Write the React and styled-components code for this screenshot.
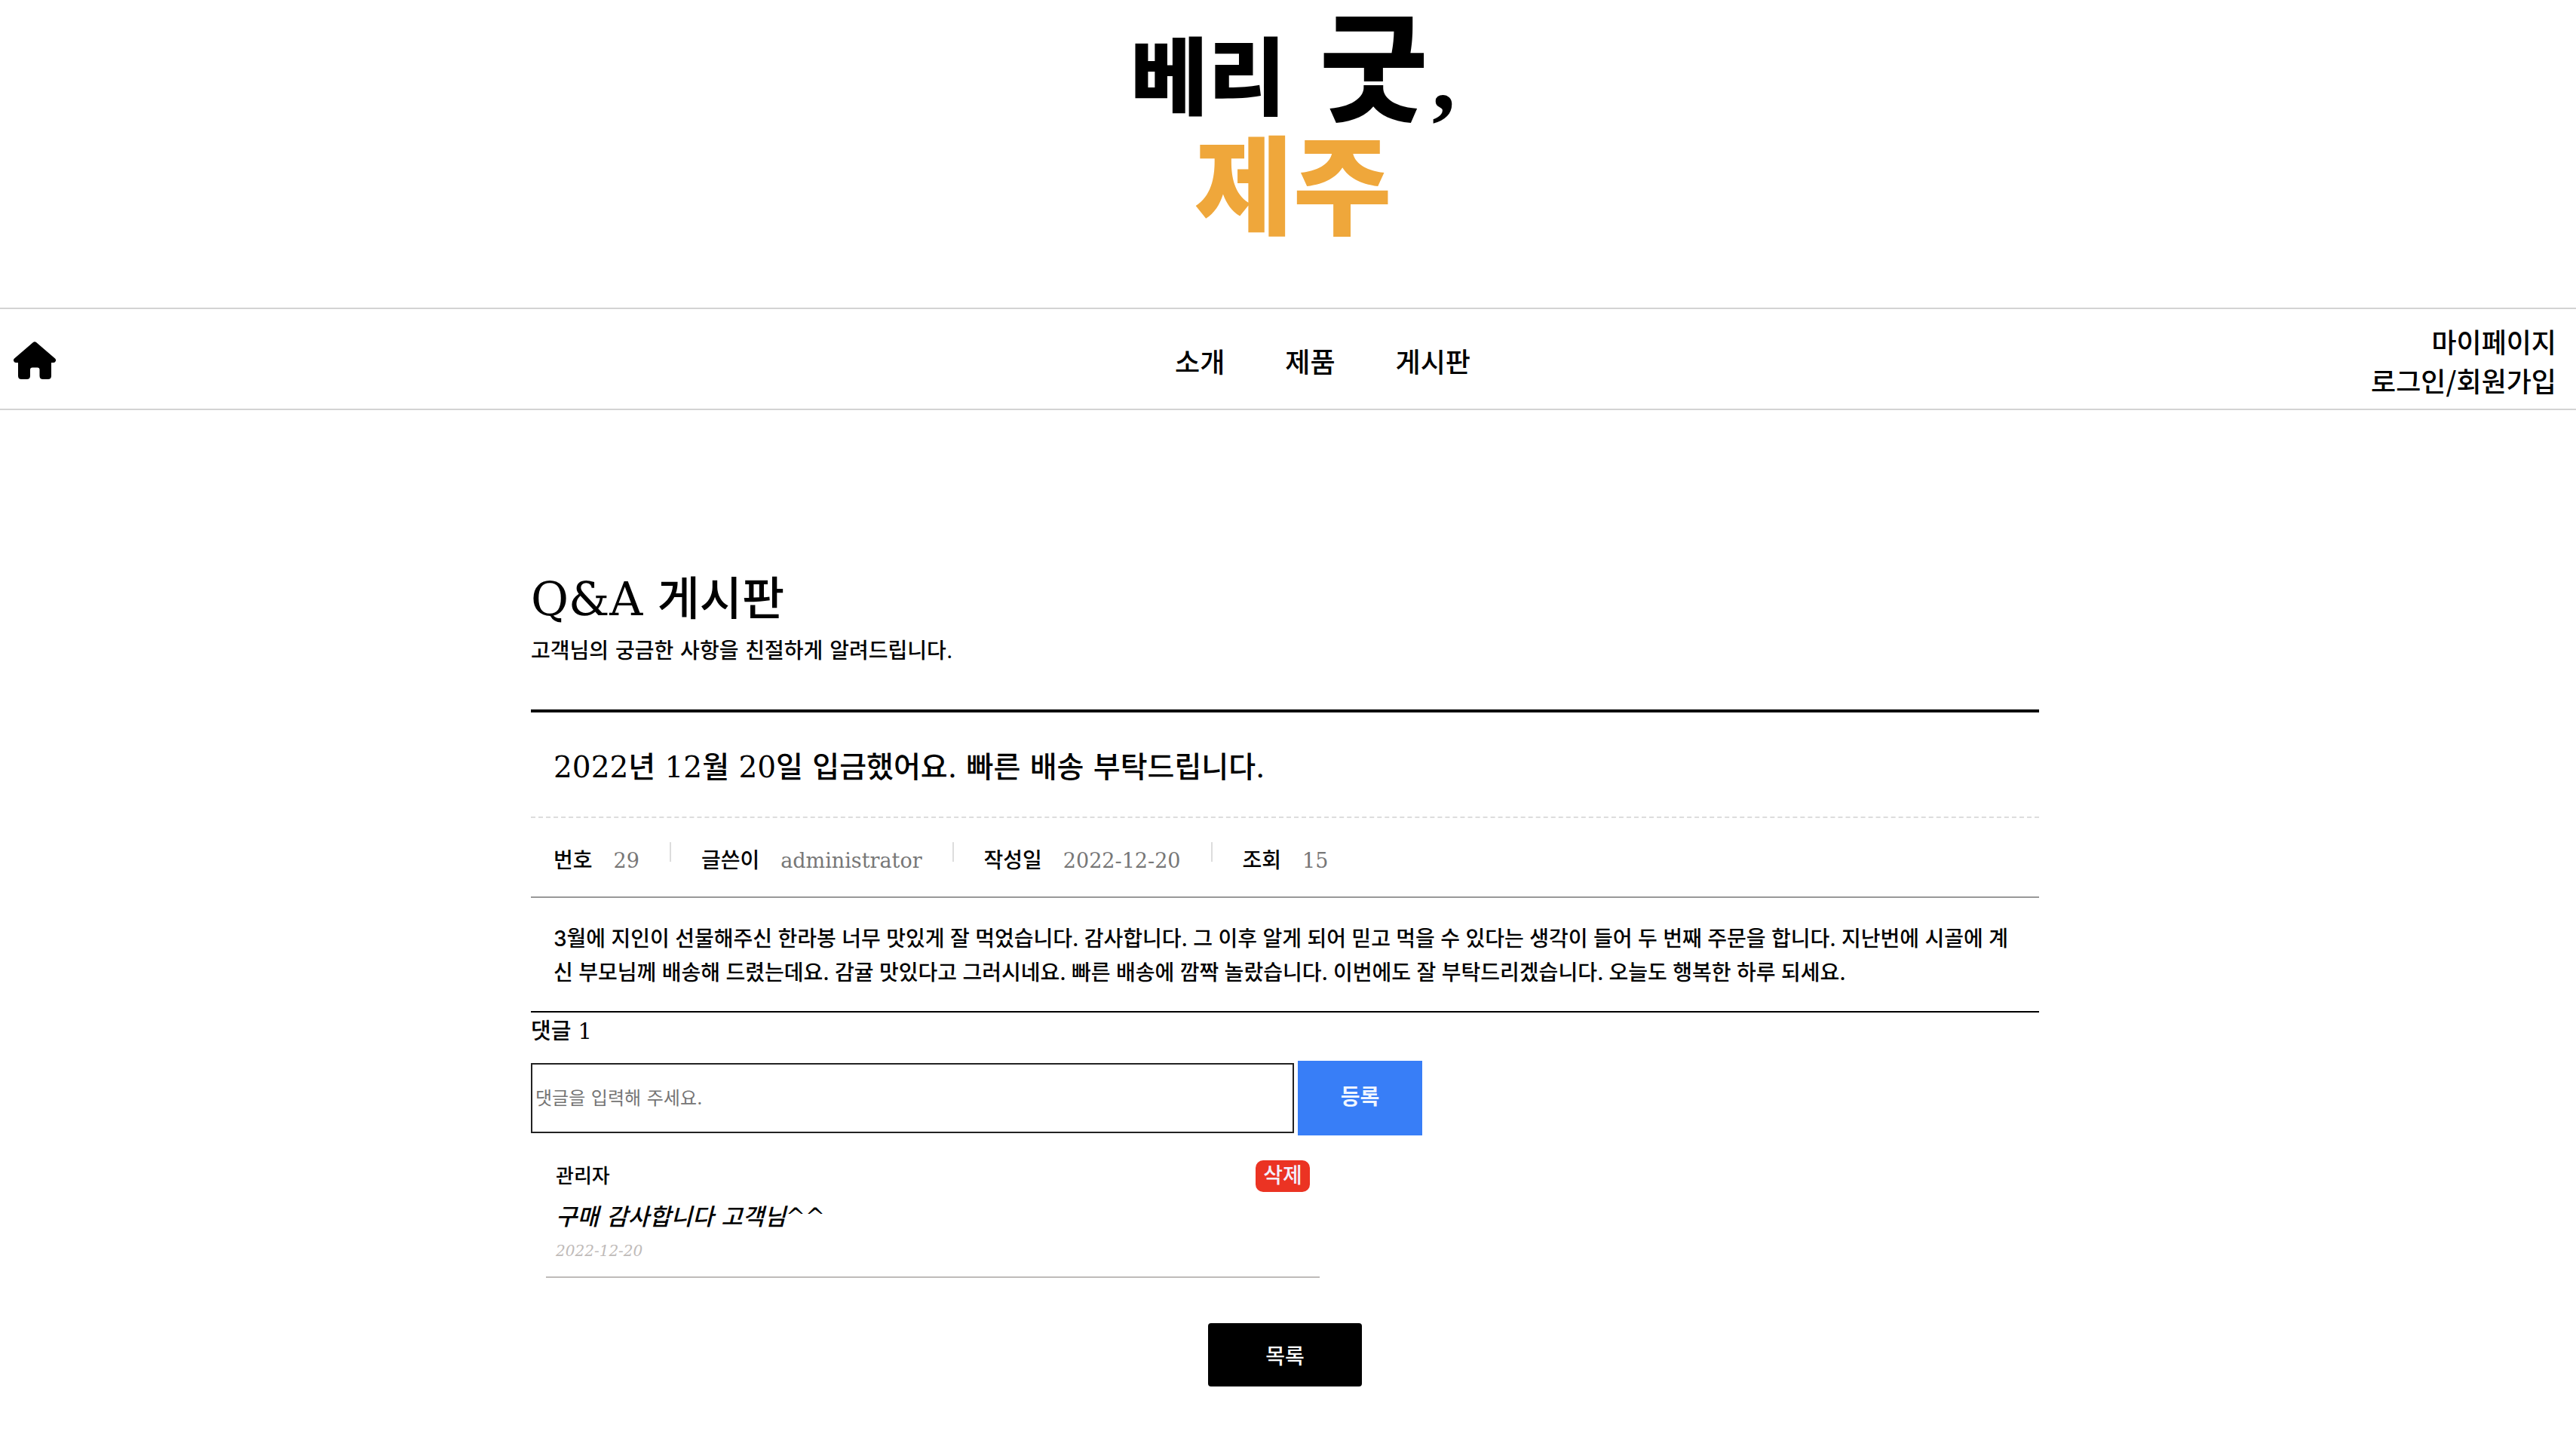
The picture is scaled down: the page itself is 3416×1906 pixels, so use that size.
import React from "react";
import styled, { createGlobalStyle } from "styled-components";

const GlobalStyle = createGlobalStyle`
  *, *::before, *::after { box-sizing: border-box; }
  body {
    margin: 0;
    background: #fff;
    color: #000;
    font-family: "DejaVu Serif", "Noto Sans CJK KR", serif;
    font-size: 28px;
    font-weight: 500;
  }
  h1, h2, h3, p, ul, dl, dd { margin: 0; padding: 0; }
  ul { list-style: none; }
  a { color: inherit; text-decoration: none; }
  button, input { font-family: inherit; }
`;

const Header = styled.header`
  display: flex;
  justify-content: center;
  height: 408px;
`;

const LogoLink = styled.a`
  display: block;
  height: 340px;
`;

const LogoText = styled.text`
  font-family: "Liberation Serif", "Noto Sans CJK KR", sans-serif;
  font-weight: 900;
  font-size: ${(p) => p.$size}px;
  fill: ${(p) => p.$color || "#000"};
`;

const NavBar = styled.nav`
  display: grid;
  grid-template-columns: 1fr auto 1fr;
  align-items: center;
  min-height: 136px;
  padding: 3px 26px 0 18px;
  border-top: 2px solid #d3d3d3;
  border-bottom: 2px solid #d3d3d3;
  font-family: "Noto Sans CJK KR", sans-serif;
  font-size: 36px;
  line-height: 52px;
`;

const HomeLink = styled.a`
  justify-self: start;
  display: flex;
`;

const Menu = styled.ul`
  display: flex;
  gap: 80px;
  padding-left: 100px;
`;

const UserMenu = styled.ul`
  text-align: right;
`;

const Main = styled.main`
  padding: 212px 8px 64px 0;
`;

const Board = styled.div`
  width: 100%;
  max-width: 2000px;
  margin: 0 auto;
`;

const Heading = styled.h1`
  font-size: 61px;
  font-weight: 500;
  line-height: 78px;
`;

const Lead = styled.p`
  margin-top: 10px;
  line-height: 40px;
`;

const Article = styled.article`
  margin-top: 57px;
  border-top: 4px solid #000;
  border-bottom: 2px solid #000;
`;

const Title = styled.h2`
  padding: 43px 30px 35px;
  border-bottom: 2px dashed #ddd;
  font-size: 39px;
  font-weight: 500;
  line-height: 60px;
`;

const Meta = styled.dl`
  display: flex;
  padding: 32px 30px 22px;
  border-bottom: 2px solid #999;
`;

const MetaItem = styled.div`
  display: flex;
  gap: 28px;
  line-height: 50px;
`;

const MetaValue = styled.dd`
  color: #777;
  font-size: 27px;
`;

const Divider = styled.span`
  width: 2px;
  height: 26px;
  margin: 0 40px;
  background: #ddd;
`;

const Content = styled.p`
  padding: 32px 24px 28px 30px;
  font-family: Inter, "Noto Sans CJK KR", sans-serif;
  line-height: 45px;
`;

const CommentHeading = styled.h3`
  font-size: 29px;
  font-weight: 500;
  line-height: 50px;
`;

const CommentForm = styled.form`
  display: flex;
  align-items: center;
  gap: 5px;
  margin-top: 14px;
`;

const CommentInput = styled.input`
  width: 1012px;
  max-width: 80%;
  height: 93px;
  padding: 0 4px;
  border: 2px solid #222;
  border-radius: 0;
  font-size: 24px;
  font-weight: 400;
  &::placeholder { color: #757575; }
`;

const SubmitButton = styled.button`
  width: 165px;
  height: 99px;
  padding: 0 0 8px;
  border: 0;
  background: #387ef7;
  color: #f0f6ff;
  font-family: "Noto Sans CJK KR", sans-serif;
  font-size: 28px;
  font-weight: 700;
`;

const CommentList = styled.ul`
  max-width: 1026px;
  margin: 33px 0 0 20px;
`;

const Comment = styled.li`
  padding: 0 13px 22px;
  border-bottom: 2px solid #bfbbb9;
`;

const CommentTop = styled.div`
  display: flex;
  align-items: center;
  justify-content: space-between;
`;

const Author = styled.span`
  font-size: 26px;
  line-height: 38px;
`;

const DeleteButton = styled.button`
  width: 72px;
  height: 42px;
  padding: 0;
  border: 0;
  border-radius: 10px;
  background: #eb3323;
  color: #f3efff;
  font-size: 28px;
  font-weight: 500;
  line-height: 38px;
`;

const CommentText = styled.p`
  font-size: 31px;
  font-style: italic;
  line-height: 66px;
`;

const CommentDate = styled.time`
  display: block;
  color: #bfbbb9;
  font-size: 20px;
  font-style: italic;
  line-height: 24px;
`;

const Actions = styled.div`
  display: flex;
  justify-content: center;
  margin-top: 60px;
`;

const ListButton = styled.button`
  width: 204px;
  height: 84px;
  border: 0;
  border-radius: 4px;
  background: #000;
  color: #fff;
  font-size: 28px;
  font-weight: 500;
`;

function Logo() {
  return (
    <svg width="480" height="340" viewBox="-20 0 480 340" role="img" aria-label="베리 굿, 제주">
      <LogoText $size={112} x="11" y="144">베리</LogoText>
      <LogoText $size={156} x="262" y="148">굿</LogoText>
      <LogoText $size={124} x="411" y="144">,</LogoText>
      <LogoText $size={142} x="96" y="300" $color="#efa73b">제주</LogoText>
    </svg>
  );
}

function HomeIcon() {
  return (
    <svg width="56" height="50" viewBox="0 0 56 50" aria-hidden="true">
      <path d="M26 1Q28 -.7 30 1L55 22.6Q56.600 24.200 55.800 26Q55 28 53 28H50V45.500Q50 50 45.500 50H39Q34.500 50 34.500 45.500V37.500Q34.500 34.500 31.500 34.500H25Q22 34.500 22 37.500V45.500Q22 50 17.500 50H10.500Q6 50 6 45.500V28H3Q1 28 .2 26Q-.6 24.200 1 22.600Z" />
    </svg>
  );
}

const menu = ["소개", "제품", "게시판"];
const userMenu = ["마이페이지", "로그인/회원가입"];
const meta = [
  ["번호", "29"],
  ["글쓴이", "administrator"],
  ["작성일", "2022-12-20"],
  ["조회", "15"],
];

export default function App() {
  return (
    <>
      <GlobalStyle />
      <Header>
        <LogoLink href="#"><Logo /></LogoLink>
      </Header>
      <NavBar>
        <HomeLink href="#" aria-label="홈"><HomeIcon /></HomeLink>
        <Menu>
          {menu.map((m) => <li key={m}><a href="#">{m}</a></li>)}
        </Menu>
        <UserMenu>
          {userMenu.map((m) => <li key={m}><a href="#">{m}</a></li>)}
        </UserMenu>
      </NavBar>
      <Main>
        <Board>
          <Heading>Q&amp;A 게시판</Heading>
          <Lead>고객님의 궁금한 사항을 친절하게 알려드립니다.</Lead>
          <Article>
            <Title>2022년 12월 20일 입금했어요. 빠른 배송 부탁드립니다.</Title>
            <Meta>
              {meta.map(([label, value], i) => (
                <React.Fragment key={label}>
                  {i > 0 && <Divider />}
                  <MetaItem>
                    <dt>{label}</dt>
                    <MetaValue>{value}</MetaValue>
                  </MetaItem>
                </React.Fragment>
              ))}
            </Meta>
            <Content>
              3월에 지인이 선물해주신 한라봉 너무 맛있게 잘 먹었습니다. 감사합니다. 그 이후 알게 되어 믿고 먹을 수 있다는 생각이 들어 두 번째 주문을 합니다. 지난번에 시골에 계신 부모님께 배송해 드렸는데요. 감귤 맛있다고 그러시네요. 빠른 배송에 깜짝 놀랐습니다. 이번에도 잘 부탁드리겠습니다. 오늘도 행복한 하루 되세요.
            </Content>
          </Article>
          <CommentHeading>댓글 1</CommentHeading>
          <CommentForm onSubmit={(e) => e.preventDefault()}>
            <CommentInput type="text" aria-label="댓글" placeholder="댓글을 입력해 주세요." />
            <SubmitButton type="submit">등록</SubmitButton>
          </CommentForm>
          <CommentList>
            <Comment>
              <CommentTop>
                <Author>관리자</Author>
                <DeleteButton type="button">삭제</DeleteButton>
              </CommentTop>
              <CommentText>구매 감사합니다 고객님^^</CommentText>
              <CommentDate dateTime="2022-12-20">2022-12-20</CommentDate>
            </Comment>
          </CommentList>
          <Actions>
            <ListButton type="button">목록</ListButton>
          </Actions>
        </Board>
      </Main>
    </>
  );
}
